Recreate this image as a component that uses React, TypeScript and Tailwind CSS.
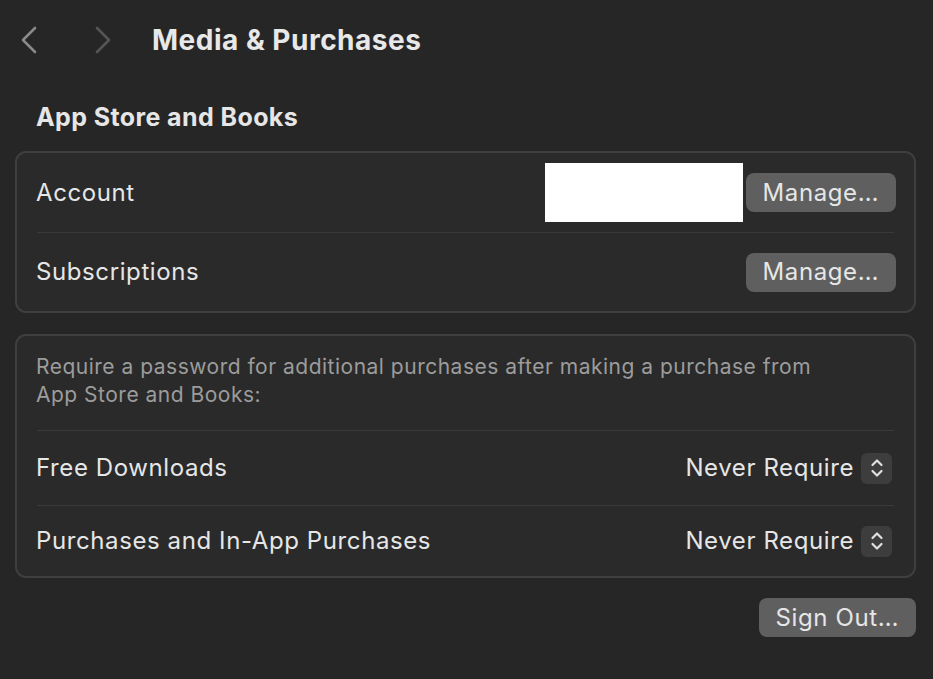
const font = { fontFamily: "Inter, 'Noto Sans', sans-serif" };

function Chevron({ dir, color }: { dir: "left" | "right"; color: string }) {
  const d = dir === "left" ? "M15 2 L3 14 L15 26" : "M3 2 L15 14 L3 26";
  return (
    <svg width="18" height="28" viewBox="0 0 18 28" fill="none" stroke={color} strokeWidth="2.6" strokeLinecap="round" strokeLinejoin="round">
      <path d={d} />
    </svg>
  );
}

function Manage({ label }: { label: string }) {
  return (
    <button className="h-[39px] rounded-[8px] bg-[#5f5f5f] px-[17px] text-[24px] leading-none tracking-[0.6px] text-[#e6e6e6]">
      {label}
    </button>
  );
}

function Stepper() {
  return (
    <span className="flex h-[31px] w-[31px] items-center justify-center rounded-[6px] bg-[#3d3d3d]">
      <svg width="16" height="22" viewBox="0 0 16 22" fill="none" stroke="#e0e0e0" strokeWidth="2.2" strokeLinecap="round" strokeLinejoin="round">
        <path d="M3.5 8 L8 3.5 L12.5 8" />
        <path d="M3.5 14 L8 18.5 L12.5 14" />
      </svg>
    </span>
  );
}

function Divider() {
  return <div className="mx-[20px] h-px bg-[#3a3a3a]" />;
}

export default function App() {
  return (
    <div className="h-[679px] w-[933px] overflow-hidden bg-[#262626] text-[#e6e6e6]" style={font}>
      <div className="flex h-[80px] items-center pl-[20px]">
        <Chevron dir="left" color="#8a8a8a" />
        <span className="ml-[56px]">
          <Chevron dir="right" color="#555555" />
        </span>
        <h1 className="ml-[40px] text-[28px] font-bold tracking-[0.5px] text-[#e8e8e8]">Media &amp; Purchases</h1>
      </div>

      <div className="pl-[15px] pr-[17px]">
        <h2 className="mb-[19px] mt-[22px] pl-[21px] text-[25px] font-bold leading-[30px] tracking-[0.4px]">App Store and Books</h2>

        <div className="rounded-[11px] border-[2px] border-[#3f3f3f] bg-[#2a2a2a] text-[24px] tracking-[0.6px]">
          <div className="flex h-[79px] items-center justify-between pl-[19px] pr-[18px]">
            <span>Account</span>
            <div className="flex items-center gap-[3px]">
              <div className="h-[59px] w-[198px] bg-white" />
              <Manage label="Manage…" />
            </div>
          </div>
          <Divider />
          <div className="flex h-[78px] items-center justify-between pl-[19px] pr-[18px]">
            <span>Subscriptions</span>
            <Manage label="Manage…" />
          </div>
        </div>

        <div className="mt-[21px] rounded-[11px] border-[2px] border-[#3f3f3f] bg-[#2a2a2a] text-[24px] tracking-[0.6px]">
          <p className="px-[19px] pb-[21px] pt-[17px] text-[21px] leading-[28px] tracking-[0.5px] text-[#9c9c9c]">
            Require a password for additional purchases after making a purchase from
            <br />
            App Store and Books:
          </p>
          <Divider />
          <div className="flex h-[74px] items-center justify-between pl-[19px] pr-[22px]">
            <span>Free Downloads</span>
            <div className="flex items-center gap-[7px]">
              <span>Never Require</span>
              <Stepper />
            </div>
          </div>
          <Divider />
          <div className="flex h-[70px] items-center justify-between pl-[19px] pr-[22px]">
            <span>Purchases and In-App Purchases</span>
            <div className="flex items-center gap-[7px]">
              <span>Never Require</span>
              <Stepper />
            </div>
          </div>
        </div>

        <div className="mt-[20px] flex justify-end">
          <button className="h-[39px] rounded-[8px] bg-[#5f5f5f] px-[17px] text-[24px] leading-none tracking-[0.6px] text-[#e6e6e6]">
            Sign Out…
          </button>
        </div>
      </div>
    </div>
  );
}
